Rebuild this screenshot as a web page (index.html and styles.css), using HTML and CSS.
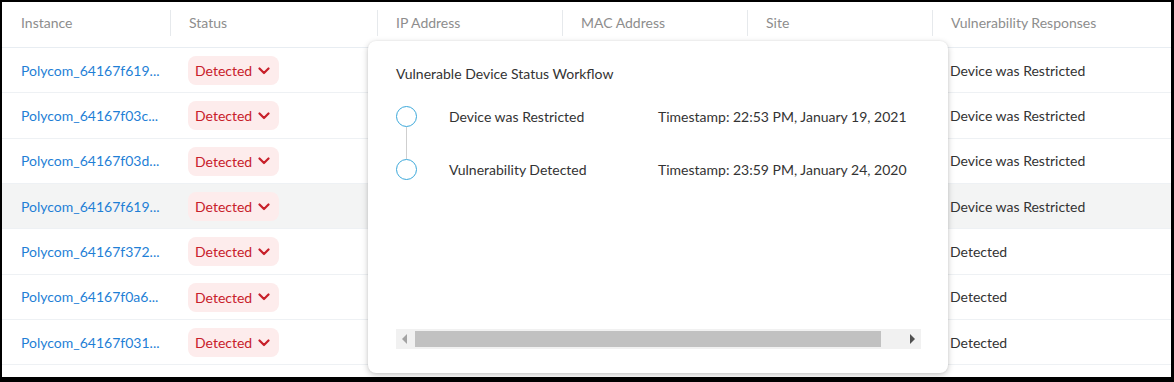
FILE: index.html
```html
<!DOCTYPE html>
<html>
<head>
<meta charset="utf-8">
<link rel="stylesheet" href="styles.css">
</head>
<body>
<div class="frame">
  <div class="table">
    <div class="row head">
      <div class="cell"><span>Instance</span></div>
      <div class="cell sep"><span>Status</span></div>
      <div class="cell sep"><span>IP Address</span></div>
      <div class="cell sep"><span>MAC Address</span></div>
      <div class="cell sep"><span>Site</span></div>
      <div class="cell sep"><span>Vulnerability Responses</span></div>
    </div>
    <div class="row">
      <div class="cell"><a class="link">Polycom_64167f619...</a></div>
      <div class="cell"><span class="pill">Detected <svg class="chev" viewBox="0 0 12 8"><path d="M1.5 1.5 6 6l4.5-4.5"/></svg></span></div>
      <div class="cell"></div><div class="cell"></div><div class="cell"></div>
      <div class="cell txt">Device was Restricted</div>
    </div>
    <div class="row">
      <div class="cell"><a class="link">Polycom_64167f03c...</a></div>
      <div class="cell"><span class="pill">Detected <svg class="chev" viewBox="0 0 12 8"><path d="M1.5 1.5 6 6l4.5-4.5"/></svg></span></div>
      <div class="cell"></div><div class="cell"></div><div class="cell"></div>
      <div class="cell txt">Device was Restricted</div>
    </div>
    <div class="row">
      <div class="cell"><a class="link">Polycom_64167f03d...</a></div>
      <div class="cell"><span class="pill">Detected <svg class="chev" viewBox="0 0 12 8"><path d="M1.5 1.5 6 6l4.5-4.5"/></svg></span></div>
      <div class="cell"></div><div class="cell"></div><div class="cell"></div>
      <div class="cell txt">Device was Restricted</div>
    </div>
    <div class="row hover">
      <div class="cell"><a class="link">Polycom_64167f619...</a></div>
      <div class="cell"><span class="pill">Detected <svg class="chev" viewBox="0 0 12 8"><path d="M1.5 1.5 6 6l4.5-4.5"/></svg></span></div>
      <div class="cell"></div><div class="cell"></div><div class="cell"></div>
      <div class="cell txt">Device was Restricted</div>
    </div>
    <div class="row">
      <div class="cell"><a class="link">Polycom_64167f372...</a></div>
      <div class="cell"><span class="pill">Detected <svg class="chev" viewBox="0 0 12 8"><path d="M1.5 1.5 6 6l4.5-4.5"/></svg></span></div>
      <div class="cell"></div><div class="cell"></div><div class="cell"></div>
      <div class="cell txt">Detected</div>
    </div>
    <div class="row">
      <div class="cell"><a class="link">Polycom_64167f0a6...</a></div>
      <div class="cell"><span class="pill">Detected <svg class="chev" viewBox="0 0 12 8"><path d="M1.5 1.5 6 6l4.5-4.5"/></svg></span></div>
      <div class="cell"></div><div class="cell"></div><div class="cell"></div>
      <div class="cell txt">Detected</div>
    </div>
    <div class="row">
      <div class="cell"><a class="link">Polycom_64167f031...</a></div>
      <div class="cell"><span class="pill">Detected <svg class="chev" viewBox="0 0 12 8"><path d="M1.5 1.5 6 6l4.5-4.5"/></svg></span></div>
      <div class="cell"></div><div class="cell"></div><div class="cell"></div>
      <div class="cell txt">Detected</div>
    </div>
  </div>

  <div class="popup">
    <div class="popup-title">Vulnerable Device Status Workflow</div>
    <div class="steps">
      <div class="step">
        <span class="dot"></span>
        <span class="label">Device was Restricted</span>
        <span class="stamp">Timestamp: 22:53 PM, January 19, 2021</span>
      </div>
      <div class="step">
        <span class="dot"></span>
        <span class="label">Vulnerability Detected</span>
        <span class="stamp">Timestamp: 23:59 PM, January 24, 2020</span>
      </div>
    </div>
    <div class="scrollbar">
      <span class="arrow left"></span>
      <span class="thumb"></span>
      <span class="arrow right"></span>
    </div>
  </div>
</div>
</body>
</html>
```

FILE: styles.css
```css
* { box-sizing: border-box; }
html, body { margin: 0; padding: 0; }
body {
  width: 1174px;
  height: 382px;
  background: #000;
  font-family: Lato, "Noto Sans", sans-serif;
  font-size: 14px;
  overflow: hidden;
}
.frame {
  position: relative;
  margin: 2px 3px 5px 2px;
  width: 1169px;
  height: 375px;
  background: #fff;
  overflow: hidden;
}
.table { display: flex; flex-direction: column; }
.row {
  display: grid;
  grid-template-columns: 168px 207px 185px 185px 185px 239px;
  height: 45.33px;
  border-bottom: 1px solid #eef1f4;
  align-items: center;
}
.row.head {
  height: 46px;
  border-bottom: 1px solid #e8edf2;
  color: #8d8d8d;
}
.row.hover { background: #f3f4f4; }
.cell {
  padding: 0 18px;
  white-space: nowrap;
  height: 100%;
  display: flex;
  align-items: center;
}
.head .cell { padding-bottom: 4px; }
.head .cell.sep { border-left: 1px solid #e6e9ec; height: 26px; margin-top: -4px; padding-bottom: 0; }
.head .cell:first-child { padding-left: 19px; }
.row .cell:first-child { padding-left: 19px; }
.link { color: #1f7fd6; }
.txt { color: #333; }
.pill {
  display: inline-flex;
  align-items: center;
  gap: 6px;
  height: 29px;
  padding: 0 9px 0 7px;
  background: #fdecec;
  border-radius: 8px;
  color: #c8202a;
  margin-top: 1px;
}
.chev {
  width: 12px;
  height: 8px;
  fill: none;
  stroke: #c8202a;
  stroke-width: 2.2;
  stroke-linecap: round;
  stroke-linejoin: round;
}
.popup {
  position: absolute;
  left: 366px;
  top: 39px;
  width: 580px;
  height: 332px;
  background: #fff;
  border-radius: 8px;
  box-shadow: 0 2px 6px rgba(0,0,0,0.22), 0 0 2px rgba(0,0,0,0.08);
  padding: 23px 27px 0 28px;
  color: #333;
  display: flex;
  flex-direction: column;
}
.popup-title { font-size: 14px; line-height: 20px; }
.steps { margin-top: 22px; display: flex; flex-direction: column; gap: 32px; }
.step {
  display: flex;
  align-items: center;
  position: relative;
  height: 21px;
}
.dot {
  width: 21px;
  height: 21px;
  border-radius: 50%;
  border: 1.5px solid #3ba8da;
  flex: none;
  background: #fff;
  position: relative;
  z-index: 1;
}
.step:first-child::after {
  content: "";
  position: absolute;
  left: 10px;
  top: 21px;
  width: 1px;
  height: 32px;
  background: #cfcfcf;
}
.label { margin-left: 32px; width: 209px; }
.stamp { }
.scrollbar {
  margin-top: auto;
  margin-bottom: 24px;
  height: 20px;
  background: #f1f1f1;
  display: flex;
  align-items: center;
  padding: 0 6px;
}
.thumb {
  height: 16px;
  background: #c1c1c1;
  width: 466px;
  margin-left: 8px;
}
.arrow { width: 0; height: 0; border-top: 5px solid transparent; border-bottom: 5px solid transparent; }
.arrow.left { border-right: 5px solid #a3a3a3; }
.arrow.right { border-left: 5px solid #505050; margin-left: auto; }
```
